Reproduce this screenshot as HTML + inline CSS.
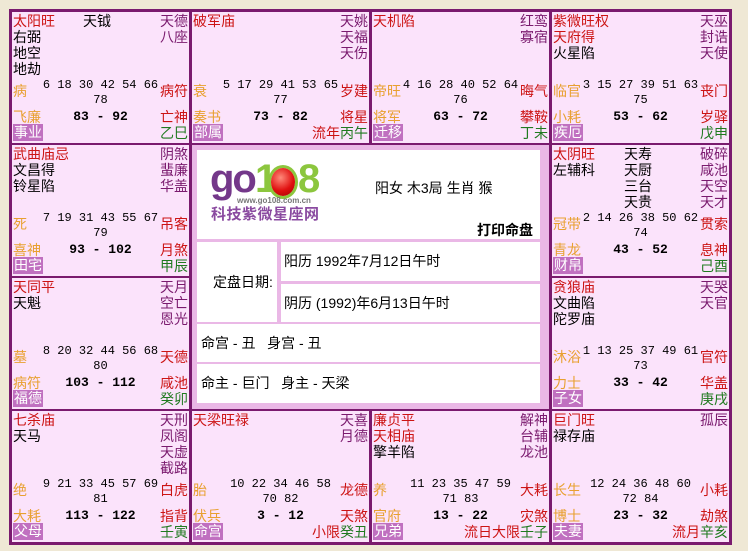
<!DOCTYPE html>
<html><head><meta charset="utf-8"><style>
*{margin:0;padding:0;box-sizing:border-box}
body{width:748px;height:551px;background:#efe8d5;position:relative;overflow:hidden;font-family:"Liberation Sans","Noto Sans CJK SC",sans-serif}
#g{position:absolute;left:9px;top:9px;width:723px;height:536px;background:#7a1a6e}
.c{position:absolute;width:177px;height:131px;background:#fbe3fb;font-size:14px;line-height:16px;overflow:hidden}
.c div{position:absolute;white-space:nowrap}
.L{left:1px;top:1px}
.M{left:70px;top:1px;color:#000}
.R{right:1px;top:1px;text-align:right;color:#7a1a6e}
.red{color:#cc1414}
.st{left:1px;top:71px;color:#e8a030}
.n{left:0;right:0;top:66px;text-align:center;font:12px/15px "Liberation Mono",monospace;color:#000}
.rs{right:1px;top:71px;color:#cc1414}
.bs{left:1px;top:97px;color:#e8a030}
.rg{left:0;right:0;top:97px;text-align:center;font:bold 13px/16px "Liberation Mono",monospace}
.rs2{right:1px;top:97px;color:#cc1414}
.lb{left:1px;top:112px;background:#c070c0;color:#fff;padding:0 1px;line-height:17px}
.gz{right:1px;top:113px;color:#1f7a1f}
#ctr{position:absolute;left:192px;top:145px;width:357px;height:264px;background:#eab8e6}
#ctr .w{position:absolute;background:#fff}
.t{position:absolute;font-size:14px;white-space:nowrap;color:#000}
</style></head><body>
<div id="g"></div>

<div class="c" style="left:12px;top:12px"><div class="L"><span class="red">太阳旺</span><br>右弼<br>地空<br>地劫</div><div class="M" style="left:71px">天钺</div><div class="R">天德<br>八座</div><div class="st">病</div><div class="n">6 18 30 42 54 66<br>78</div><div class="rs">病符</div><div class="bs">飞廉</div><div class="rg">83 - 92</div><div class="rs2">亡神</div><div class="lb">事业</div><div class="gz">乙巳</div></div>

<div class="c" style="left:192px;top:12px"><div class="L red">破军庙</div><div class="R">天姚<br>天福<br>天伤</div><div class="st">衰</div><div class="n">5 17 29 41 53 65<br>77</div><div class="rs">岁建</div><div class="bs">奏书</div><div class="rg">73 - 82</div><div class="rs2">将星</div><div class="lb">部属</div><div class="gz"><span class="red">流年</span>丙午</div></div>

<div class="c" style="left:372px;top:12px"><div class="L red">天机陷</div><div class="R">红鸾<br>寡宿</div><div class="st">帝旺</div><div class="n">4 16 28 40 52 64<br>76</div><div class="rs">晦气</div><div class="bs">将军</div><div class="rg">63 - 72</div><div class="rs2">攀鞍</div><div class="lb">迁移</div><div class="gz">丁未</div></div>

<div class="c" style="left:552px;top:12px"><div class="L"><span class="red">紫微旺权<br>天府得</span><br>火星陷</div><div class="R">天巫<br>封诰<br>天使</div><div class="st">临官</div><div class="n">3 15 27 39 51 63<br>75</div><div class="rs">丧门</div><div class="bs">小耗</div><div class="rg">53 - 62</div><div class="rs2">岁驿</div><div class="lb">疾厄</div><div class="gz">戊申</div></div>

<div class="c" style="left:12px;top:145px"><div class="L"><span class="red">武曲庙忌</span><br>文昌得<br>铃星陷</div><div class="R">阴煞<br>蜚廉<br>华盖</div><div class="st">死</div><div class="n">7 19 31 43 55 67<br>79</div><div class="rs">吊客</div><div class="bs">喜神</div><div class="rg">93 - 102</div><div class="rs2">月煞</div><div class="lb">田宅</div><div class="gz">甲辰</div></div>

<div class="c" style="left:552px;top:145px"><div class="L"><span class="red">太阴旺</span><br>左辅科</div><div class="M" style="left:72px">天寿<br>天厨<br>三台<br>天贵</div><div class="R">破碎<br>咸池<br>天空<br>天才</div><div class="st">冠带</div><div class="n">2 14 26 38 50 62<br>74</div><div class="rs">贯索</div><div class="bs">青龙</div><div class="rg">43 - 52</div><div class="rs2">息神</div><div class="lb">财帛</div><div class="gz">己酉</div></div>

<div class="c" style="left:12px;top:278px"><div class="L"><span class="red">天同平</span><br>天魁</div><div class="R">天月<br>空亡<br>恩光</div><div class="st">墓</div><div class="n">8 20 32 44 56 68<br>80</div><div class="rs">天德</div><div class="bs">病符</div><div class="rg">103 - 112</div><div class="rs2">咸池</div><div class="lb">福德</div><div class="gz">癸卯</div></div>

<div class="c" style="left:552px;top:278px"><div class="L"><span class="red">贪狼庙</span><br>文曲陷<br>陀罗庙</div><div class="R">天哭<br>天官</div><div class="st">沐浴</div><div class="n">1 13 25 37 49 61<br>73</div><div class="rs">官符</div><div class="bs">力士</div><div class="rg">33 - 42</div><div class="rs2">华盖</div><div class="lb">子女</div><div class="gz">庚戌</div></div>

<div class="c" style="left:12px;top:411px"><div class="L"><span class="red">七杀庙</span><br>天马</div><div class="R">天刑<br>凤阁<br>天虚<br>截路</div><div class="st">绝</div><div class="n">9 21 33 45 57 69<br>81</div><div class="rs">白虎</div><div class="bs">大耗</div><div class="rg">113 - 122</div><div class="rs2">指背</div><div class="lb">父母</div><div class="gz">壬寅</div></div>

<div class="c" style="left:192px;top:411px"><div class="L red">天梁旺禄</div><div class="R">天喜<br>月德</div><div class="st">胎</div><div class="n">10 22 34 46 58<br>70 82</div><div class="rs">龙德</div><div class="bs">伏兵</div><div class="rg">3 - 12</div><div class="rs2">天煞</div><div class="lb">命宫</div><div class="gz"><span class="red">小限</span>癸丑</div></div>

<div class="c" style="left:372px;top:411px"><div class="L"><span class="red">廉贞平<br>天相庙</span><br>擎羊陷</div><div class="R">解神<br>台辅<br>龙池</div><div class="st">养</div><div class="n">11 23 35 47 59<br>71 83</div><div class="rs">大耗</div><div class="bs">官府</div><div class="rg">13 - 22</div><div class="rs2">灾煞</div><div class="lb">兄弟</div><div class="gz"><span class="red">流日大限</span>壬子</div></div>

<div class="c" style="left:552px;top:411px"><div class="L"><span class="red">巨门旺</span><br>禄存庙</div><div class="R">孤辰</div><div class="st">长生</div><div class="n">12 24 36 48 60<br>72 84</div><div class="rs">小耗</div><div class="bs">博士</div><div class="rg">23 - 32</div><div class="rs2">劫煞</div><div class="lb">夫妻</div><div class="gz"><span class="red">流月</span>辛亥</div></div>

<div id="ctr">
<div class="w" style="left:5px;top:5px;width:343px;height:89px"></div>
<div class="w" style="left:5px;top:97px;width:80px;height:80px"></div>
<div class="w" style="left:89px;top:97px;width:259px;height:39px"></div>
<div class="w" style="left:89px;top:139px;width:259px;height:38px"></div>
<div class="w" style="left:5px;top:179px;width:343px;height:38px"></div>
<div class="w" style="left:5px;top:219px;width:343px;height:39px"></div>
</div>

<div class="t" style="left:210px;top:158px;font:bold 40px/42px 'Liberation Sans',sans-serif;color:#74388a;letter-spacing:-2px">go</div>
<div class="t" style="left:255px;top:158px;font:bold 40px/42px 'Liberation Sans',sans-serif;color:#8cc63e">1</div>
<div style="position:absolute;left:271px;top:168px;width:24px;height:28px;border-radius:50%;background:radial-gradient(circle at 40% 35%,#ff8a7a,#e01010 55%,#a00000);box-shadow:0 0 0 3px #8cc63e"></div>
<div class="t" style="left:298px;top:158px;font:bold 40px/42px 'Liberation Sans',sans-serif;color:#8cc63e">8</div>
<div class="t" style="left:237px;top:196px;font:bold 8px/10px 'Liberation Sans',sans-serif;color:#777">www.go108.com.cn</div>
<div class="t" style="left:211px;top:206px;font:bold 15px/18px 'Liberation Sans','Noto Sans CJK SC',sans-serif;color:#8a4aa0;letter-spacing:0.5px">科技紫微星座网</div>
<div class="t" style="left:375px;top:178px">阳女 木3局 生肖 猴</div>
<div class="t" style="left:477px;top:220px;font-weight:bold">打印命盘</div>
<div class="t" style="left:213px;top:272px">定盘日期:</div>
<div class="t" style="left:284px;top:251px">阳历 1992年7月12日午时</div>
<div class="t" style="left:284px;top:293px">阴历 (1992)年6月13日午时</div>
<div class="t" style="left:201px;top:333px">命宫 - 丑&nbsp;&nbsp; 身宫 - 丑</div>
<div class="t" style="left:201px;top:373px">命主 - 巨门&nbsp;&nbsp; 身主 - 天梁</div>
</body></html>
